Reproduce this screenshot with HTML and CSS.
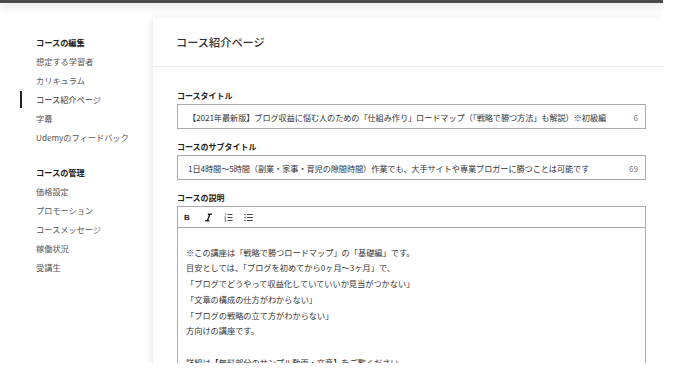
FILE: index.html
```html
<!DOCTYPE html>
<html lang="ja">
<head>
  <meta charset="UTF-8" />
  <title>コース紹介ページ</title>
  <link rel="stylesheet" href="styles.css">
</head>
<body>
  <div class="page">
    <div class="topbar"></div>

    <div class="layout">
      <nav class="sidebar">
        <div class="nav-group">
          <div class="nav-title">コースの編集</div>
          <a class="nav-item">想定する学習者</a>
          <a class="nav-item">カリキュラム</a>
          <a class="nav-item active">コース紹介ページ</a>
          <a class="nav-item">字幕</a>
          <a class="nav-item">Udemyのフィードバック</a>
        </div>
        <div class="nav-group">
          <div class="nav-title">コースの管理</div>
          <a class="nav-item">価格設定</a>
          <a class="nav-item">プロモーション</a>
          <a class="nav-item">コースメッセージ</a>
          <a class="nav-item">稼働状況</a>
          <a class="nav-item">受講生</a>
        </div>
      </nav>

      <main class="panel">
        <header class="panel-header">
          <h1>コース紹介ページ</h1>
        </header>

        <div class="panel-body">
          <div class="field">
            <label>コースタイトル</label>
            <div class="text-input">
              <span class="value">【2021年最新版】ブログ収益に悩む人のための「仕組み作り」ロードマップ（「戦略で勝つ方法」も解説）※初級編</span>
              <span class="counter">6</span>
            </div>
          </div>

          <div class="field">
            <label>コースのサブタイトル</label>
            <div class="text-input">
              <span class="value">1日4時間〜5時間（副業・家事・育児の隙間時間）作業でも、大手サイトや専業ブロガーに勝つことは可能です</span>
              <span class="counter">69</span>
            </div>
          </div>

          <div class="field">
            <label>コースの説明</label>
            <div class="editor">
              <div class="toolbar">
                <span class="tool tool-bold">B</span>
                <svg class="tool" width="9" height="9" viewBox="0 0 9 9">
                  <path d="M3.8 1.3h4M1.2 7.7h4M5.8 1.3l-2.4 6.4" stroke="#222" stroke-width="1.4" fill="none"/>
                </svg>
                <svg class="tool" width="9" height="9" viewBox="0 0 9 9">
                  <path d="M3.5 1.5h5M3.5 4.5h5M3.5 7.5h5" stroke="#333" stroke-width="0.9" fill="none"/>
                  <path d="M0.8 0.6h0.8v1.8M0.6 3.8h1.2l-1.2 1.5h1.3M0.6 6.4h1.2v2.2H0.6M0.8 7.5h1" stroke="#333" stroke-width="0.5" fill="none"/>
                </svg>
                <svg class="tool" width="9" height="9" viewBox="0 0 9 9">
                  <path d="M2.8 1.5h6M2.8 4.5h6M2.8 7.5h6" stroke="#333" stroke-width="0.9" fill="none"/>
                  <circle cx="1" cy="1.5" r="0.7" fill="#333"/>
                  <circle cx="1" cy="4.5" r="0.7" fill="#333"/>
                  <circle cx="1" cy="7.5" r="0.7" fill="#333"/>
                </svg>
              </div>
              <div class="editor-content">
                <p>&nbsp;</p>
                <p>※この講座は「戦略で勝つロードマップ」の「基礎編」です。</p>
                <p>目安としては、「ブログを初めてから0ヶ月〜3ヶ月」で、</p>
                <p>「ブログでどうやって収益化していていいか見当がつかない」</p>
                <p>「文章の構成の仕方がわからない」</p>
                <p>「ブログの戦略の立て方がわからない」</p>
                <p>方向けの講座です。</p>
                <p>&nbsp;</p>
                <p>詳細は【無料部分のサンプル動画・文章】をご覧ください。</p>
              </div>
            </div>
          </div>
        </div>
      </main>
    </div>
  </div>
</body>
</html>
```

FILE: styles.css
```css
* {
  box-sizing: border-box;
  margin: 0;
  padding: 0;
}

body {
  background: #fff;
  font-family: 'Noto Sans CJK JP', 'Noto Sans', sans-serif;
  color: #333;
}

.page {
  width: 663px;
  height: 363px;
  overflow: hidden;
  position: relative;
}

.topbar {
  height: 3px;
  background: #4a4a4a;
  box-shadow: 0 2px 10px rgba(0, 0, 0, 0.25);
  position: relative;
  z-index: 2;
}

.layout {
  display: flex;
  padding-top: 15px;
}

.sidebar {
  width: 153px;
  flex-shrink: 0;
  padding-top: 15px;
}

.nav-group {
  margin-bottom: 16px;
}

.nav-title,
.nav-item {
  display: block;
  position: relative;
  height: 19px;
  line-height: 19px;
  padding-left: 36px;
  font-size: 8.2px;
  color: #555;
}

.nav-title {
  font-weight: 700;
  color: #222;
}

.nav-item.active {
  color: #333;
}

.nav-item.active::before {
  content: "";
  position: absolute;
  left: 20px;
  top: 1px;
  width: 2px;
  height: 17px;
  background: #222;
}

.panel {
  flex: 1;
  background: #fff;
  box-shadow: -2px 0 6px rgba(0, 0, 0, 0.08);
  height: 360px;
}

.panel-header {
  height: 49px;
  border-bottom: 1px solid #ececec;
  display: flex;
  align-items: center;
  padding-left: 23px;
}

.panel-header h1 {
  font-size: 11.2px;
  font-weight: 500;
  color: #333;
}

.panel-body {
  padding: 24px 17px 0 24px;
}

.field {
  margin-bottom: 13px;
}

.field label {
  display: block;
  font-size: 8px;
  font-weight: 700;
  color: #222;
  line-height: 10px;
  margin-bottom: 3px;
}

.text-input {
  height: 25px;
  border: 1px solid #aaa;
  display: flex;
  align-items: center;
  justify-content: space-between;
  padding: 0 7px 0 10px;
  font-size: 8.2px;
}

.text-input .value {
  color: #333;
  white-space: nowrap;
  overflow: hidden;
  letter-spacing: -0.1px;
}

.counter {
  color: #777;
}

.editor {
  border: 1px solid #aaa;
  border-bottom: none;
  height: 160px;
}

.toolbar {
  height: 21px;
  border-bottom: 1px solid #aaa;
  display: flex;
  align-items: center;
  gap: 11px;
  padding-left: 6px;
}

.tool {
  display: block;
}

.tool-bold {
  font-family: 'Liberation Sans', sans-serif;
  font-size: 8px;
  font-weight: 700;
  color: #222;
  width: 9px;
}

.editor-content {
  padding: 1px 8px 0 8px;
  font-size: 8.2px;
  line-height: 15.7px;
  color: #333;
}
```
